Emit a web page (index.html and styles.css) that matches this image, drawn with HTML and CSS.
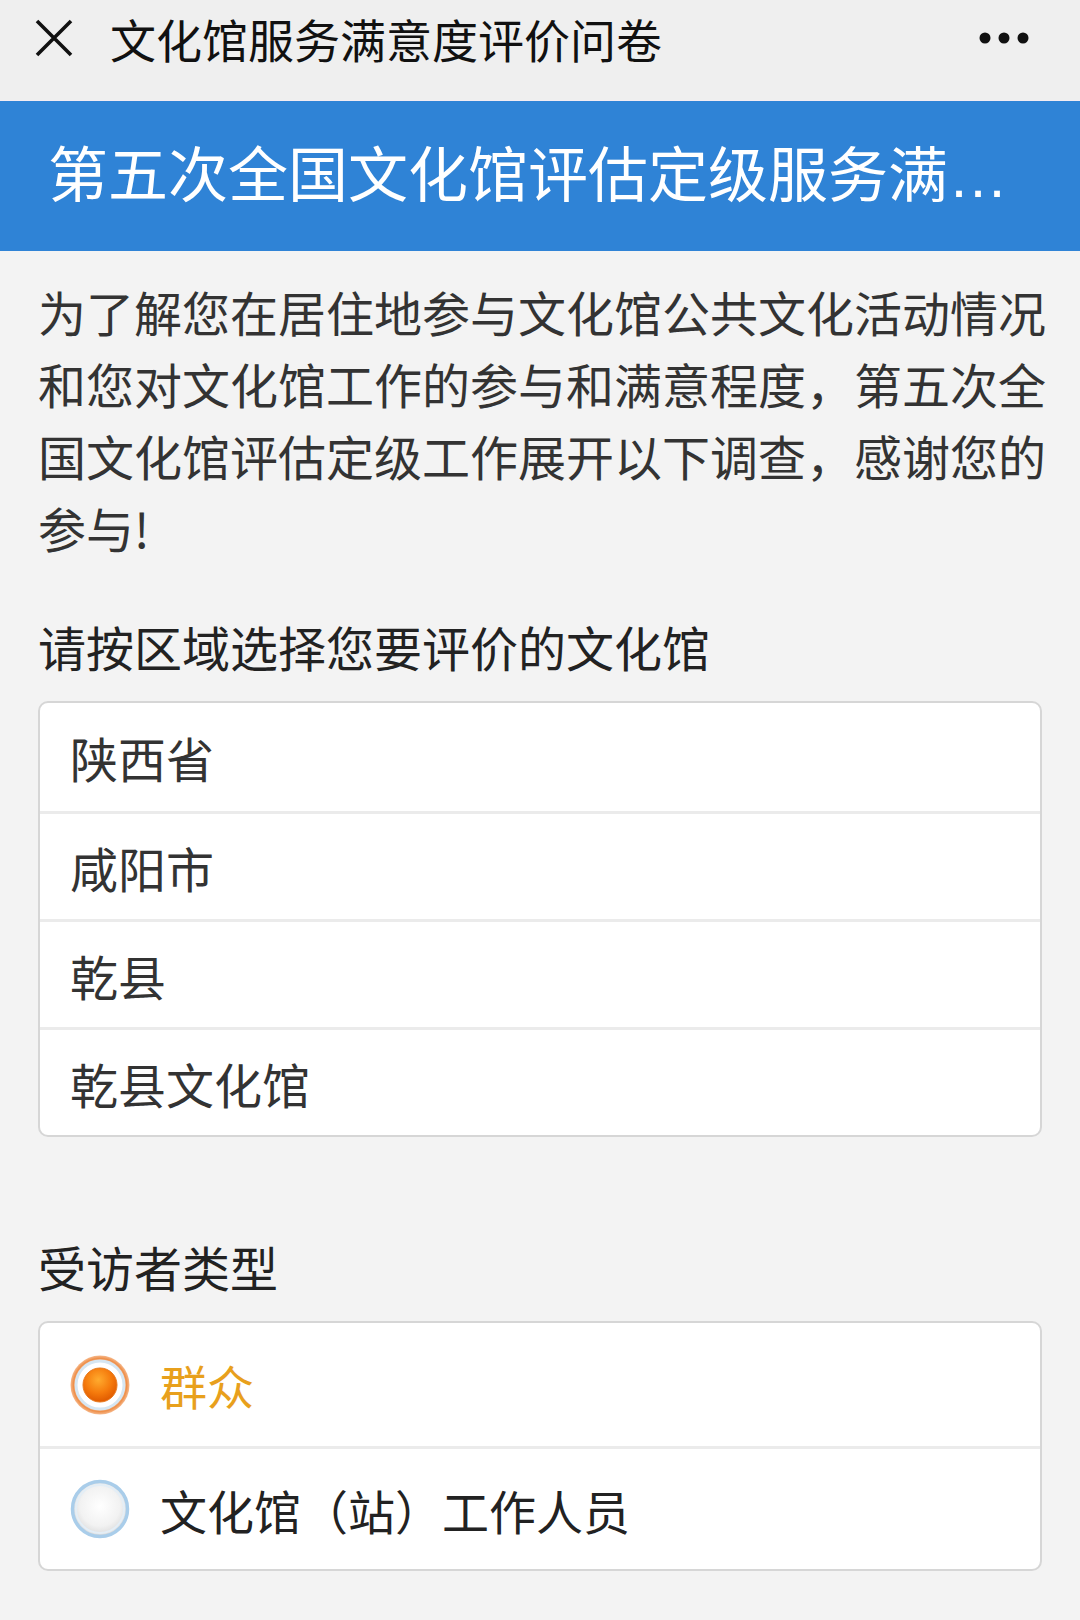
FILE: index.html
```html
<!DOCTYPE html>
<html lang="zh-CN">
<head>
<meta charset="utf-8">
<title>文化馆服务满意度评价问卷</title>
<link rel="stylesheet" href="styles.css">
</head>
<body>
<header class="navbar">
  <svg class="close-icon" width="38" height="38" viewBox="0 0 38 38"><path d="M2 2 L36 36 M36 2 L2 36" stroke="#111" stroke-width="3.6" stroke-linecap="butt" fill="none"/></svg>
  <div class="nav-title">文化馆服务满意度评价问卷</div>
  <svg class="more-icon" width="50" height="14" viewBox="0 0 50 14"><circle cx="6" cy="7" r="5.5" fill="#111"/><circle cx="25" cy="7" r="5.5" fill="#111"/><circle cx="44" cy="7" r="5.5" fill="#111"/></svg>
</header>
<div class="banner"><div class="banner-text">第五次全国文化馆评估定级服务满意度评价问卷</div></div>
<main class="content">
  <p class="intro">为了解您在居住地参与文化馆公共文化活动情况和您对文化馆工作的参与和满意程度，第五次全国文化馆评估定级工作展开以下调查，感谢您的参与!</p>
  <div class="label label-first">请按区域选择您要评价的文化馆</div>
  <div class="box">
    <div class="row select-row">陕西省</div>
    <div class="row select-row">咸阳市</div>
    <div class="row select-row">乾县</div>
    <div class="row select-row">乾县文化馆</div>
  </div>
  <div class="label label-second">受访者类型</div>
  <div class="box">
    <div class="row radio-row checked">
      <svg class="radio" width="60" height="60" viewBox="0 0 60 60">
        <defs>
          <radialGradient id="og" cx="45%" cy="35%" r="65%">
            <stop offset="0" stop-color="#ffab2e"/>
            <stop offset="0.6" stop-color="#f57a0c"/>
            <stop offset="1" stop-color="#e05a00"/>
          </radialGradient>
          <radialGradient id="ring" cx="50%" cy="50%" r="50%">
            <stop offset="0.8" stop-color="#f7c39a"/>
            <stop offset="0.9" stop-color="#ee8f4a"/>
            <stop offset="1" stop-color="#f6b98c"/>
          </radialGradient>
        </defs>
        <circle cx="30" cy="30" r="29.5" fill="url(#ring)"/>
        <circle cx="30" cy="30" r="24" fill="#fff" stroke="#d6e6f2" stroke-width="3"/>
        <circle cx="30" cy="30" r="17" fill="url(#og)" stroke="#e87a1e" stroke-width="1"/>
      </svg>
      <span class="radio-label">群众</span>
    </div>
    <div class="row radio-row">
      <svg class="radio" width="60" height="60" viewBox="0 0 60 60">
        <defs>
          <radialGradient id="wg" cx="50%" cy="45%" r="60%">
            <stop offset="0" stop-color="#ffffff"/>
            <stop offset="0.6" stop-color="#f2f2f2"/>
            <stop offset="1" stop-color="#d2d2d2"/>
          </radialGradient>
        </defs>
        <circle cx="30" cy="30" r="27.5" fill="url(#wg)" stroke="#a9cdea" stroke-width="3.5"/>
        <circle cx="30" cy="30" r="24" fill="none" stroke="#e4eef6" stroke-width="2"/>
      </svg>
      <span class="radio-label">文化馆（站）工作人员</span>
    </div>
  </div>
</main>
</body>
</html>
```
FILE: styles.css
```css
html, body {
  margin: 0;
  padding: 0;
}
body {
  background: #f3f3f3;
  font-family: "Noto Sans CJK SC", "Noto Sans", sans-serif;
  color: #333;
  width: 1080px;
  min-height: 1620px;
}
.navbar {
  box-sizing: border-box;
  height: 101px;
  padding: 0 51px 25px 35px;
  background: #efefef;
  border-bottom: 1px solid #f4ecf2;
  display: flex;
  align-items: center;
}
.close-icon {
  flex: none;
  display: block;
}
.nav-title {
  margin-left: 37px;
  font-size: 46px;
  line-height: 60px;
  color: #111;
  flex: 1;
  white-space: nowrap;
}
.more-icon {
  flex: none;
  display: block;
}
.banner {
  background: #2f83d6;
  height: 150px;
  box-sizing: border-box;
  padding: 0 40px 0 48px;
  display: flex;
  align-items: center;
}
.banner-text {
  width: 100%;
  color: #fff;
  font-family: "Liberation Sans", "Noto Sans CJK SC", sans-serif;
  font-size: 60px;
  line-height: 76px;
  white-space: nowrap;
  overflow: hidden;
  text-overflow: ellipsis;
  padding-top: 2px;
}
.content {
  padding: 24px 34px 0 38px;
}
.intro {
  margin: 0;
  font-size: 48px;
  line-height: 72px;
  color: #333;
}
.label {
  font-size: 48px;
  line-height: 72px;
  color: #222;
}
.label-first {
  margin-top: 47px;
  margin-bottom: 19px;
}
.label-second {
  margin-top: 93px;
  margin-bottom: 19px;
}
.box {
  background: #fff;
  border: 2px solid #d6d6d6;
  border-radius: 10px;
  margin-right: 4px;
  overflow: hidden;
}
.row {
  border-top: 3px solid #ebebeb;
  display: flex;
  align-items: center;
  box-sizing: border-box;
}
.row:first-child {
  border-top: 0;
}
.select-row {
  height: 108px;
  padding-left: 30px;
  font-size: 48px;
  color: #333;
}
.radio-row {
  height: 123px;
  padding-left: 30px;
}
.radio {
  flex: none;
  display: block;
}
.radio-label {
  margin-left: 30px;
  font-size: 47px;
  color: #222;
}
.checked .radio-label {
  color: #e8a01c;
}
```
